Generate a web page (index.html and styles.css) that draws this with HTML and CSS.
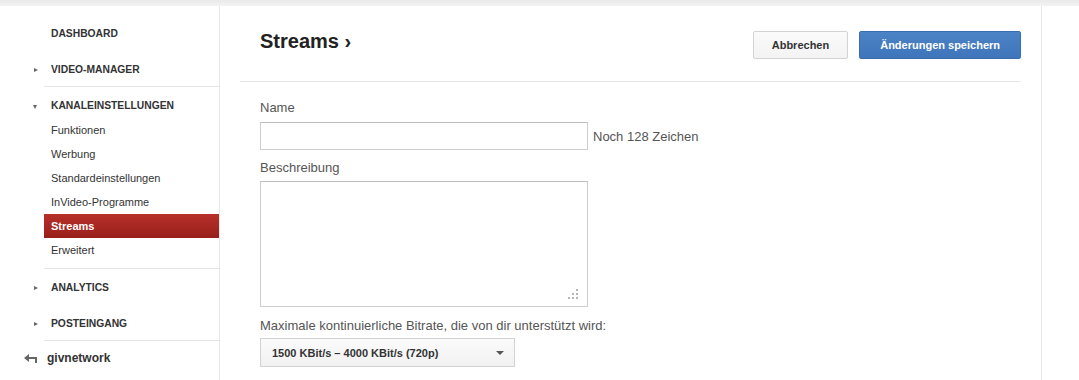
FILE: index.html
```html
<!DOCTYPE html>
<html lang="de">
<head>
    <meta charset="UTF-8">
    <title>Streams</title>
    <link rel="stylesheet" href="styles.css">
</head>
<body>
    <div class="topbar"></div>
    <div class="page">
        <div class="sidebar">
            <div class="nav-item">DASHBOARD</div>
            <div class="nav-item"><span class="caret"></span>VIDEO-MANAGER</div>
            <div class="section">
                <div class="section-head"><span class="caret open"></span>KANALEINSTELLUNGEN</div>
                <div class="sub-item">Funktionen</div>
                <div class="sub-item">Werbung</div>
                <div class="sub-item">Standardeinstellungen</div>
                <div class="sub-item">InVideo-Programme</div>
                <div class="sub-item active">Streams</div>
                <div class="sub-item">Erweitert</div>
            </div>
            <div class="nav-item"><span class="caret"></span>ANALYTICS</div>
            <div class="nav-item last"><span class="caret"></span>POSTEINGANG</div>
            <div class="back">
                <svg width="13" height="9" viewBox="0 0 13 9">
                    <path d="M0 4 L5 0 V3 H13 V9 H11 V5 H5 V8 Z" fill="#666"/>
                </svg>
                <span>givnetwork</span>
            </div>
        </div>

        <div class="main">
            <div class="header">
                <h1>Streams ›</h1>
                <div class="actions">
                    <button class="btn">Abbrechen</button>
                    <button class="btn primary">Änderungen speichern</button>
                </div>
            </div>

            <div class="form">
                <label class="label">Name</label>
                <div class="row">
                    <input type="text" class="field">
                    <span class="hint">Noch 128 Zeichen</span>
                </div>

                <label class="label">Beschreibung</label>
                <div class="area-wrap">
                    <textarea class="area"></textarea>
                    <svg class="grip" width="11" height="11" viewBox="0 0 11 11">
                        <rect x="8" y="0" width="2" height="2" fill="#b5b5b5"/>
                        <rect x="4" y="4" width="2" height="2" fill="#b5b5b5"/>
                        <rect x="8" y="4" width="2" height="2" fill="#b5b5b5"/>
                        <rect x="0" y="8" width="2" height="2" fill="#b5b5b5"/>
                        <rect x="4" y="8" width="2" height="2" fill="#b5b5b5"/>
                        <rect x="8" y="8" width="2" height="2" fill="#b5b5b5"/>
                    </svg>
                </div>

                <label class="label">Maximale kontinuierliche Bitrate, die von dir unterstützt wird:</label>
                <div class="select">
                    <span>1500 KBit/s – 4000 KBit/s (720p)</span>
                    <span class="arrow"></span>
                </div>
            </div>
        </div>
    </div>
</body>
</html>
```

FILE: styles.css
```css
body {
    margin: 0;
    font-family: 'Liberation Sans', Arial, sans-serif;
    background-color: #fff;
    color: #333;
}

.topbar {
    height: 6px;
    background: linear-gradient(#e9e9e9, #f3f3f3);
}

.page {
    display: flex;
    height: 374px;
}

/* Sidebar */
.sidebar {
    width: 219px;
    border-right: 1px solid #e8e8e8;
    padding-top: 9px;
    box-sizing: content-box;
}

.nav-item {
    position: relative;
    height: 36px;
    line-height: 38px;
    margin-left: 44px;
    padding-left: 7px;
    font-size: 10.3px;
    font-weight: bold;
    color: #333;
}

.nav-item:nth-child(2),
.nav-item.last {
    border-bottom: 1px solid #e5e5e5;
    height: 35px;
}

.caret {
    position: absolute;
    left: -10px;
    top: 17px;
    width: 0;
    height: 0;
    border-top: 2.5px solid transparent;
    border-bottom: 2.5px solid transparent;
    border-left: 4px solid #666;
}

.caret.open {
    top: 11px;
    left: -11px;
    border-left: 2.5px solid transparent;
    border-right: 2.5px solid transparent;
    border-top: 4px solid #666;
    border-bottom: none;
}

.section {
    margin-left: 44px;
    padding: 7px 0 6px;
    border-bottom: 1px solid #e5e5e5;
}

.section-head {
    position: relative;
    height: 24px;
    line-height: 24px;
    padding-left: 7px;
    font-size: 10.3px;
    font-weight: bold;
}

.sub-item {
    height: 24px;
    line-height: 24px;
    padding-left: 7px;
    font-size: 11px;
    color: #333;
}

.sub-item.active {
    background: linear-gradient(#b8302a, #981f1a);
    color: #fff;
    font-weight: bold;
}

.back {
    display: flex;
    align-items: center;
    height: 34px;
    padding-left: 24px;
    font-size: 12px;
    font-weight: bold;
    color: #333;
}

.back svg {
    margin-right: 10px;
}

/* Main */
.main {
    width: 781px;
    padding: 0 20px;
    border-right: 1px solid #e8e8e8;
}

.header {
    display: flex;
    justify-content: space-between;
    align-items: flex-start;
    height: 75px;
    padding: 0 0 0 20px;
    border-bottom: 1px solid #e5e5e5;
}

h1 {
    margin: 21px 0 0;
    font-size: 20px;
    line-height: 28px;
    color: #222;
}

.actions {
    display: flex;
    gap: 11px;
    margin-top: 25px;
}

.btn {
    height: 28px;
    padding: 0 18px;
    border: 1px solid #d3d3d3;
    border-radius: 2px;
    background: linear-gradient(#fafafa, #f3f3f3);
    font-family: inherit;
    font-size: 11px;
    font-weight: bold;
    color: #333;
}

.btn.primary {
    padding: 0 20px;
    border-color: #3a6db0;
    background: linear-gradient(#4c83c6, #3f76bb);
    color: #fff;
}

.form {
    padding: 18px 20px 0;
}

.label {
    display: block;
    font-size: 13px;
    line-height: 16px;
    color: #555;
}

.row {
    display: flex;
    align-items: center;
    height: 28px;
    margin: 6px 0 10px;
}

.field {
    width: 328px;
    height: 28px;
    box-sizing: border-box;
    border: 1px solid #cfcfcf;
    border-top-color: #bdbdbd;
    border-radius: 0;
    margin: 0;
}

.hint {
    margin-left: 5px;
    font-size: 13px;
    color: #555;
}

.area-wrap {
    position: relative;
    width: 328px;
    margin: 5px 0 11px;
}

.area {
    display: block;
    width: 328px;
    height: 126px;
    box-sizing: border-box;
    border: 1px solid #cfcfcf;
    border-top-color: #bdbdbd;
    resize: none;
    margin: 0;
}

.grip {
    position: absolute;
    right: 9px;
    bottom: 7px;
}

.select {
    display: flex;
    align-items: center;
    justify-content: space-between;
    width: 255px;
    height: 29px;
    box-sizing: border-box;
    margin-top: 4px;
    padding: 0 10px 0 11px;
    border: 1px solid #d3d3d3;
    background: linear-gradient(#fbfbfb, #f1f1f1);
    font-size: 11px;
    font-weight: bold;
    color: #333;
}

.arrow {
    width: 0;
    height: 0;
    border-left: 4px solid transparent;
    border-right: 4px solid transparent;
    border-top: 4px solid #555;
}
```
